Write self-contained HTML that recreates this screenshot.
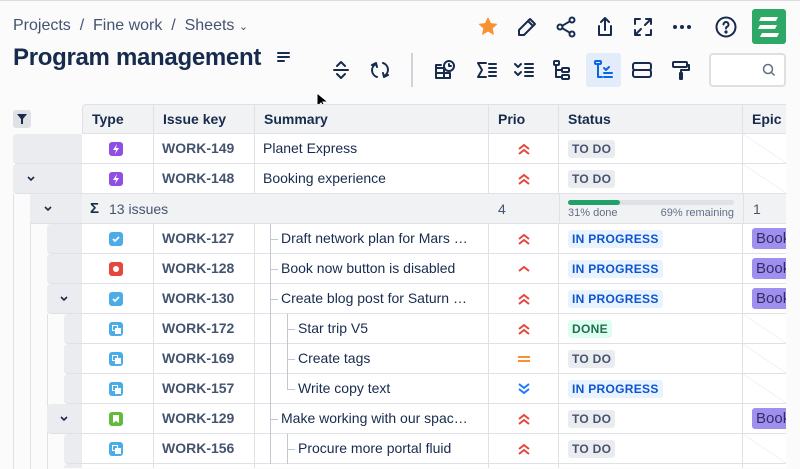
<!DOCTYPE html>
<html><head><style>
*{box-sizing:border-box;margin:0;padding:0}
html,body{width:800px;height:469px;overflow:hidden}
body{background:#fbfbfc;font-family:"Liberation Sans",sans-serif;color:#172b4d;position:relative}
.a{position:absolute}
.bc{left:13px;top:17px;font-size:16px;color:#44546f}
.title{left:13px;top:44px;font-size:24px;font-weight:bold;color:#172b4d;letter-spacing:-0.3px}
.ic{position:absolute;width:24px;height:24px}
.ic svg{width:24px;height:24px;fill:none;stroke:#172b4d;stroke-width:2;stroke-linecap:round;stroke-linejoin:round;display:block}
.row{position:absolute;left:0;width:786px;height:30px}
.c{position:absolute;top:0;height:30px;border-right:1px solid #dfe1e6;border-bottom:1px solid #dfe1e6;background:#fff;font-size:14px;line-height:29px}
.hd .c{background:#f1f2f4;font-weight:bold;color:#172b4d;padding-left:9px}
.g{position:absolute;top:0;height:30px;background:#ebecf0;border-radius:4px 0 0 4px;border-bottom:1px solid #dfe1e6}
.key{color:#44546f;font-weight:bold;padding-left:8px}
.sum{padding-left:8px;color:#172b4d;white-space:nowrap;overflow:hidden}
.ty{position:absolute;left:27px;top:8px;width:14px;height:14px;border-radius:3px}
.ty svg{display:block}
.lz{font-size:12px;font-weight:bold;padding:0 4px;border-radius:3px;line-height:18px;position:absolute;left:9px;top:6px;letter-spacing:0.3px}
.todo{background:#ebecf0;color:#44546f}
.prog{background:#e9f2ff;color:#0c55cf}
.done{background:#dcfff1;color:#216e4e}
.ep{overflow:hidden;border-right:none}
.book{position:absolute;left:9px;top:4px;background:#9f8fef;color:#352c63;border-radius:3px;padding:0 4px;line-height:21px;font-size:15px;width:40px;overflow:hidden;white-space:nowrap}
.chev{position:absolute;top:11px;width:8px;height:8px}
.vl{position:absolute;top:0;height:30px;width:1px;background:#c1c7d0}
.hl{position:absolute;top:15px;height:1px;background:#c1c7d0}
.prio{position:absolute;left:28px;top:8px}
.diag{background:linear-gradient(to top right,#fff calc(50% - 0.5px),#e4e6ea 50%,#fff calc(50% + 0.5px))}
</style></head><body>
<div class="a" style="left:0;top:0;width:800px;height:1px;background:#ddd"></div>
<div class="a bc">Projects &nbsp;/&nbsp; Fine work &nbsp;/&nbsp; Sheets <span style="font-size:11px">&#8964;</span></div>
<div class="a title">Program management</div>
<div class="ic" style="left:273px;top:46px"><svg viewBox="0 0 24 24"><path d="M5 7h11M5 11h11M5 15h6"/></svg></div>
<div class="ic" style="left:476px;top:15px"><svg viewBox="0 0 24 24"><path style="fill:#f79232;stroke:#f79232;stroke-width:1" d="M12 3l2.6 5.6 6 .6-4.5 4 1.3 6-5.4-3.2-5.4 3.2 1.3-6-4.5-4 6-.6z"/></svg></div>
<div class="ic" style="left:515px;top:15px"><svg viewBox="0 0 24 24"><path d="M15 4l5 5-11 11H4v-5zM13 6l5 5"/></svg></div>
<div class="ic" style="left:554px;top:15px"><svg viewBox="0 0 24 24"><circle cx="18" cy="5" r="2.5"/><circle cx="6" cy="12" r="2.5"/><circle cx="18" cy="19" r="2.5"/><path d="M8.2 10.8l7.6-4.5M8.2 13.2l7.6 4.5"/></svg></div>
<div class="ic" style="left:593px;top:15px"><svg viewBox="0 0 24 24"><path d="M12 3v12M8 7l4-4 4 4M6 11v9h12v-9"/></svg></div>
<div class="ic" style="left:631px;top:15px"><svg viewBox="0 0 24 24"><path d="M4 9V4h5M15 4h5v5M20 15v5h-5M9 20H4v-5M5 19l5-5M19 5l-5 5"/></svg></div>
<div class="ic" style="left:670px;top:15px"><svg viewBox="0 0 24 24"><circle cx="5" cy="12" r="1" style="fill:#172b4d"/><circle cx="12" cy="12" r="1" style="fill:#172b4d"/><circle cx="19" cy="12" r="1" style="fill:#172b4d"/></svg></div>
<div class="ic" style="left:714px;top:15px"><svg viewBox="0 0 24 24"><circle cx="12" cy="12" r="9.5"/><path d="M9.5 9.5a2.5 2.5 0 1 1 3.5 2.3c-.7.4-1 .9-1 1.7"/><circle cx="12" cy="17" r=".6" style="fill:#172b4d"/></svg></div>
<div class="a" style="left:752px;top:9px;width:34px;height:35px;background:#2ea866;border-radius:3px"><svg viewBox="0 0 34 35" width="34" height="35"><path d="M9 8h17l-2 4H7zM8 16h17l-2 4H6zM10 24h17l-2 4H8z" fill="#fff"/></svg></div>
<div class="ic" style="left:329px;top:58px"><svg viewBox="0 0 24 24"><path d="M5 12h14M8 8l4-4 4 4M8 16l4 4 4-4"/></svg></div>
<div class="ic" style="left:368px;top:58px"><svg viewBox="0 0 24 24"><path d="M9 19a7 7 0 0 1-1-13M4 7l4-2 1 4M15 5a7 7 0 0 1 1 13M20 17l-4 2-1-4"/></svg></div>
<div class="a" style="left:411px;top:53px;width:2px;height:34px;background:#d0d3d9"></div>
<div class="ic" style="left:433px;top:58px"><svg viewBox="0 0 24 24"><path d="M3 10h8v10H3zM3 15h14v5h-6M3 10V7h5"/><circle cx="16" cy="8" r="5"/><path d="M16 6v2h2"/></svg></div>
<div class="ic" style="left:475px;top:58px"><svg viewBox="0 0 24 24"><path d="M11 5H3l4 7-4 7h8M14 6h7M14 10h7M14 14h7M14 18h7"/></svg></div>
<div class="ic" style="left:512px;top:58px"><svg viewBox="0 0 24 24"><path d="M3 6l3 3 3-3M3 14l3 3 3-3M13 6h8M13 10h8M13 14h8M13 18h8"/></svg></div>
<div class="ic" style="left:550px;top:58px"><svg viewBox="0 0 24 24"><rect x="4" y="3" width="5" height="4" rx="1"/><path d="M6 7v12h5M6 12h5"/><rect x="12" y="10" width="7" height="4" rx="1"/><rect x="12" y="17" width="7" height="4" rx="1"/></svg></div>
<div class="a" style="left:586px;top:53px;width:35px;height:34px;background:#e2ecfb;border-radius:3px"></div>
<div class="ic" style="left:592px;top:58px"><svg viewBox="0 0 24 24" style="stroke:#0c66e4"><rect x="3" y="3" width="6" height="3" rx="1"/><path d="M6 6v13h4M12 10l2 2 3-3M12 15h8M12 19h8"/></svg></div>
<div class="ic" style="left:630px;top:58px"><svg viewBox="0 0 24 24"><rect x="3" y="5" width="18" height="7" rx="2"/><rect x="3" y="12" width="18" height="7" rx="2"/></svg></div>
<div class="ic" style="left:669px;top:58px"><svg viewBox="0 0 24 24"><rect x="4" y="4" width="14" height="5" rx="1"/><path d="M18 7h2v5h-8v3M11 15h2v6h-2z"/></svg></div>
<div class="a" style="left:709px;top:53px;width:77px;height:34px;border:2px solid #dcdfe4;border-radius:4px;background:#fff"><svg style="position:absolute;left:50px;top:7px" width="16" height="16" viewBox="0 0 16 16"><circle cx="7" cy="7" r="4.5" fill="none" stroke="#626f86" stroke-width="1.5"/><path d="M10.5 10.5l3 3" stroke="#626f86" stroke-width="1.5"/></svg></div>
<svg class="a" style="left:316px;top:92px" width="12" height="18" viewBox="0 0 12 18"><path d="M1 1v14l4-4 3 6 2-1-3-6h5z" fill="#000" stroke="#fff"/></svg>

<div class="a" style="left:13px;top:110px;width:18px;height:18px;background:#dfe1e6;border-radius:3px"><svg width="18" height="18" viewBox="0 0 18 18"><path d="M4 4h10l-4 5v5h-2v-5z" fill="#172b4d"/></svg></div>

<div class="row hd" style="top:104px">
<div class="c" style="left:82px;width:72px;border-left:1px solid #dfe1e6;border-top:1px solid #dfe1e6;border-radius:4px 0 0 0">Type</div>
<div class="c" style="left:154px;width:101px;border-top:1px solid #dfe1e6">Issue key</div>
<div class="c" style="left:255px;width:234px;border-top:1px solid #dfe1e6">Summary</div>
<div class="c" style="left:489px;width:70px;border-top:1px solid #dfe1e6">Prio</div>
<div class="c" style="left:559px;width:184px;border-top:1px solid #dfe1e6">Status</div>
<div class="c ep" style="left:743px;width:43px;border-top:1px solid #dfe1e6">Epic</div>
</div>

<div class="a" style="left:13px;top:194px;width:1px;height:275px;background:#dfe1e6"></div>
<div class="a" style="left:30px;top:224px;width:1px;height:245px;background:#dfe1e6"></div>

<div class="row" style="top:134px">
<div class="g" style="left:13px;width:69px"></div>
<div class="c" style="left:82px;width:72px"><div class="ty" style="background:#904ee2"><svg width="14" height="14" viewBox="0 0 14 14"><path d="M8 2L4 8h3l-1 4 4-6H7z" fill="#fff"/></svg></div></div>
<div class="c key" style="left:154px;width:101px">WORK-149</div>
<div class="c sum" style="left:255px;width:234px">Planet Express</div>
<div class="c" style="left:489px;width:70px"><svg class="prio" width="14" height="14" viewBox="0 0 14 14"><path d="M2 7l5-4 5 4M2 12l5-4 5 4" fill="none" stroke="#e2483d" stroke-width="2"/></svg></div>
<div class="c" style="left:559px;width:184px"><span class="lz todo">TO DO</span></div>
<div class="c diag ep" style="left:743px;width:43px"></div>
</div>
<div class="row" style="top:164px">
<div class="g" style="left:13px;width:69px"><svg class="chev" style="left:14px" viewBox="0 0 8 8"><path d="M1 2l3 3 3-3" fill="none" stroke="#172b4d" stroke-width="1.6"/></svg></div>
<div class="c" style="left:82px;width:72px"><div class="ty" style="background:#904ee2"><svg width="14" height="14" viewBox="0 0 14 14"><path d="M8 2L4 8h3l-1 4 4-6H7z" fill="#fff"/></svg></div></div>
<div class="c key" style="left:154px;width:101px">WORK-148</div>
<div class="c sum" style="left:255px;width:234px">Booking experience</div>
<div class="c" style="left:489px;width:70px"><svg class="prio" width="14" height="14" viewBox="0 0 14 14"><path d="M2 7l5-4 5 4M2 12l5-4 5 4" fill="none" stroke="#e2483d" stroke-width="2"/></svg></div>
<div class="c" style="left:559px;width:184px"><span class="lz todo">TO DO</span></div>
<div class="c diag ep" style="left:743px;width:43px"></div>
</div>
<div class="row" style="top:194px">
<div class="a" style="left:30px;top:0;width:756px;height:30px;background:#f1f2f4;border-bottom:1px solid #dfe1e6"></div>
<div class="g" style="left:30px;width:52px;background:#ebecf0"><svg class="chev" style="left:14px" viewBox="0 0 8 8"><path d="M1 2l3 3 3-3" fill="none" stroke="#172b4d" stroke-width="1.6"/></svg></div>
<div class="a" style="left:90px;top:6px;font-size:15px;font-weight:bold">Σ</div>
<div class="a" style="left:109px;top:7px;font-size:14px;color:#44546f">13 issues</div>
<div class="a" style="left:498px;top:7px;font-size:14px;color:#44546f">4</div>
<div class="a" style="left:568px;top:6px;width:166px;height:5px;background:#dfe1e6;border-radius:3px"><div style="width:52px;height:5px;background:#22a06b;border-radius:3px"></div></div>
<div class="a" style="left:568px;top:13px;font-size:11px;color:#626f86;width:166px">31% done<span style="float:right">69% remaining</span></div>
<div class="a" style="left:753px;top:7px;font-size:14px;color:#44546f">1</div>
<div class="a" style="left:559px;top:0;width:1px;height:30px;background:#dfe1e6"></div>
<div class="a" style="left:743px;top:0;width:1px;height:30px;background:#dfe1e6"></div>
</div>

<div class="row" style="top:224px">
<div class="g" style="left:47px;width:35px"></div>
<div class="c" style="left:82px;width:72px"><div class="ty" style="background:#4bade8"><svg width="14" height="14" viewBox="0 0 14 14"><path d="M4 7l2 2 4-4" stroke="#fff" stroke-width="1.8" fill="none"/></svg></div></div>
<div class="c key" style="left:154px;width:101px">WORK-127</div>
<div class="c sum" style="left:255px;width:234px;padding-left:26px">Draft network plan for Mars …</div>
<div class="vl" style="left:270px"></div><div class="hl" style="left:270px;width:8px"></div>
<div class="c" style="left:489px;width:70px"><svg class="prio" width="14" height="14" viewBox="0 0 14 14"><path d="M2 7l5-4 5 4M2 12l5-4 5 4" fill="none" stroke="#e2483d" stroke-width="2"/></svg></div>
<div class="c" style="left:559px;width:184px"><span class="lz prog">IN PROGRESS</span></div>
<div class="c ep" style="left:743px;width:43px"><span class="book">Book</span></div>
</div>
<div class="row" style="top:254px">
<div class="g" style="left:47px;width:35px"></div>
<div class="c" style="left:82px;width:72px"><div class="ty" style="background:#e2483d"><div style="position:absolute;left:4px;top:4px;width:6px;height:6px;border-radius:3px;background:#fff"></div></div></div>
<div class="c key" style="left:154px;width:101px">WORK-128</div>
<div class="c sum" style="left:255px;width:234px;padding-left:26px">Book now button is disabled</div>
<div class="vl" style="left:270px"></div><div class="hl" style="left:270px;width:8px"></div>
<div class="c" style="left:489px;width:70px"><svg class="prio" width="14" height="14" viewBox="0 0 14 14"><path d="M2 9l5-4 5 4" fill="none" stroke="#e2483d" stroke-width="2"/></svg></div>
<div class="c" style="left:559px;width:184px"><span class="lz prog">IN PROGRESS</span></div>
<div class="c ep" style="left:743px;width:43px"><span class="book">Book</span></div>
</div>
<div class="row" style="top:284px">
<div class="g" style="left:47px;width:35px"><svg class="chev" style="left:13px" viewBox="0 0 8 8"><path d="M1 2l3 3 3-3" fill="none" stroke="#172b4d" stroke-width="1.6"/></svg></div>
<div class="c" style="left:82px;width:72px"><div class="ty" style="background:#4bade8"><svg width="14" height="14" viewBox="0 0 14 14"><path d="M4 7l2 2 4-4" stroke="#fff" stroke-width="1.8" fill="none"/></svg></div></div>
<div class="c key" style="left:154px;width:101px">WORK-130</div>
<div class="c sum" style="left:255px;width:234px;padding-left:26px">Create blog post for Saturn …</div>
<div class="vl" style="left:270px"></div><div class="hl" style="left:270px;width:8px"></div>
<div class="c" style="left:489px;width:70px"><svg class="prio" width="14" height="14" viewBox="0 0 14 14"><path d="M2 7l5-4 5 4M2 12l5-4 5 4" fill="none" stroke="#e2483d" stroke-width="2"/></svg></div>
<div class="c" style="left:559px;width:184px"><span class="lz prog">IN PROGRESS</span></div>
<div class="c ep" style="left:743px;width:43px"><span class="book">Book</span></div>
</div>
<div class="a" style="left:47px;top:314px;width:1px;height:155px;background:#dfe1e6"></div>
<div class="row" style="top:314px">
<div class="g" style="left:64px;width:18px"></div>
<div class="c" style="left:82px;width:72px"><div class="ty" style="background:#4bade8"><div style="position:absolute;left:3px;top:3px;width:6px;height:6px;border:1.5px solid #fff"></div><div style="position:absolute;left:6px;top:6px;width:6px;height:6px;background:#fff"></div></div></div>
<div class="c key" style="left:154px;width:101px">WORK-172</div>
<div class="c sum" style="left:255px;width:234px;padding-left:43px">Star trip V5</div>
<div class="vl" style="left:270px"></div><div class="vl" style="left:287px"></div><div class="hl" style="left:287px;width:8px"></div>
<div class="c" style="left:489px;width:70px"><svg class="prio" width="14" height="14" viewBox="0 0 14 14"><path d="M2 7l5-4 5 4M2 12l5-4 5 4" fill="none" stroke="#e2483d" stroke-width="2"/></svg></div>
<div class="c" style="left:559px;width:184px"><span class="lz done">DONE</span></div>
<div class="c diag ep" style="left:743px;width:43px"></div>
</div>
<div class="row" style="top:344px">
<div class="g" style="left:64px;width:18px"></div>
<div class="c" style="left:82px;width:72px"><div class="ty" style="background:#4bade8"><div style="position:absolute;left:3px;top:3px;width:6px;height:6px;border:1.5px solid #fff"></div><div style="position:absolute;left:6px;top:6px;width:6px;height:6px;background:#fff"></div></div></div>
<div class="c key" style="left:154px;width:101px">WORK-169</div>
<div class="c sum" style="left:255px;width:234px;padding-left:43px">Create tags</div>
<div class="vl" style="left:270px"></div><div class="vl" style="left:287px"></div><div class="hl" style="left:287px;width:8px"></div>
<div class="c" style="left:489px;width:70px"><svg class="prio" width="14" height="14" viewBox="0 0 14 14"><path d="M1 5h12M1 9h12" fill="none" stroke="#f79232" stroke-width="2"/></svg></div>
<div class="c" style="left:559px;width:184px"><span class="lz todo">TO DO</span></div>
<div class="c diag ep" style="left:743px;width:43px"></div>
</div>
<div class="row" style="top:374px">
<div class="g" style="left:64px;width:18px"></div>
<div class="c" style="left:82px;width:72px"><div class="ty" style="background:#4bade8"><div style="position:absolute;left:3px;top:3px;width:6px;height:6px;border:1.5px solid #fff"></div><div style="position:absolute;left:6px;top:6px;width:6px;height:6px;background:#fff"></div></div></div>
<div class="c key" style="left:154px;width:101px">WORK-157</div>
<div class="c sum" style="left:255px;width:234px;padding-left:43px">Write copy text</div>
<div class="vl" style="left:270px"></div><div class="vl" style="left:287px;height:15px"></div><div class="hl" style="left:287px;width:8px"></div>
<div class="c" style="left:489px;width:70px"><svg class="prio" width="14" height="14" viewBox="0 0 14 14"><path d="M2 2l5 4 5-4M2 7l5 4 5-4" fill="none" stroke="#1d7afc" stroke-width="2"/></svg></div>
<div class="c" style="left:559px;width:184px"><span class="lz prog">IN PROGRESS</span></div>
<div class="c diag ep" style="left:743px;width:43px"></div>
</div>
<div class="row" style="top:404px">
<div class="g" style="left:47px;width:35px"><svg class="chev" style="left:13px" viewBox="0 0 8 8"><path d="M1 2l3 3 3-3" fill="none" stroke="#172b4d" stroke-width="1.6"/></svg></div>
<div class="c" style="left:82px;width:72px"><div class="ty" style="background:#63ba3c"><svg width="14" height="14" viewBox="0 0 14 14"><path d="M4 3h6v8l-3-2-3 2z" fill="#fff"/></svg></div></div>
<div class="c key" style="left:154px;width:101px">WORK-129</div>
<div class="c sum" style="left:255px;width:234px;padding-left:26px">Make working with our spac…</div>
<div class="vl" style="left:270px"></div><div class="hl" style="left:270px;width:8px"></div>
<div class="c" style="left:489px;width:70px"><svg class="prio" width="14" height="14" viewBox="0 0 14 14"><path d="M2 7l5-4 5 4M2 12l5-4 5 4" fill="none" stroke="#e2483d" stroke-width="2"/></svg></div>
<div class="c" style="left:559px;width:184px"><span class="lz todo">TO DO</span></div>
<div class="c ep" style="left:743px;width:43px"><span class="book">Book</span></div>
</div>
<div class="row" style="top:434px">
<div class="g" style="left:64px;width:18px"></div>
<div class="c" style="left:82px;width:72px"><div class="ty" style="background:#4bade8"><div style="position:absolute;left:3px;top:3px;width:6px;height:6px;border:1.5px solid #fff"></div><div style="position:absolute;left:6px;top:6px;width:6px;height:6px;background:#fff"></div></div></div>
<div class="c key" style="left:154px;width:101px">WORK-156</div>
<div class="c sum" style="left:255px;width:234px;padding-left:43px">Procure more portal fluid</div>
<div class="vl" style="left:270px"></div><div class="vl" style="left:287px"></div><div class="hl" style="left:287px;width:8px"></div>
<div class="c" style="left:489px;width:70px"><svg class="prio" width="14" height="14" viewBox="0 0 14 14"><path d="M2 7l5-4 5 4M2 12l5-4 5 4" fill="none" stroke="#e2483d" stroke-width="2"/></svg></div>
<div class="c" style="left:559px;width:184px"><span class="lz todo">TO DO</span></div>
<div class="c diag ep" style="left:743px;width:43px"></div>
</div>
<div class="row" style="top:464px;height:4px;overflow:hidden">
<div class="g" style="left:64px;width:18px"></div>
<div class="c" style="left:82px;width:72px"></div>
<div class="c" style="left:154px;width:101px"></div>
<div class="c" style="left:255px;width:234px"></div>
<div class="c" style="left:489px;width:70px"></div>
<div class="c" style="left:559px;width:184px"></div>
<div class="c ep" style="left:743px;width:43px"></div>
</div>
</body></html>
